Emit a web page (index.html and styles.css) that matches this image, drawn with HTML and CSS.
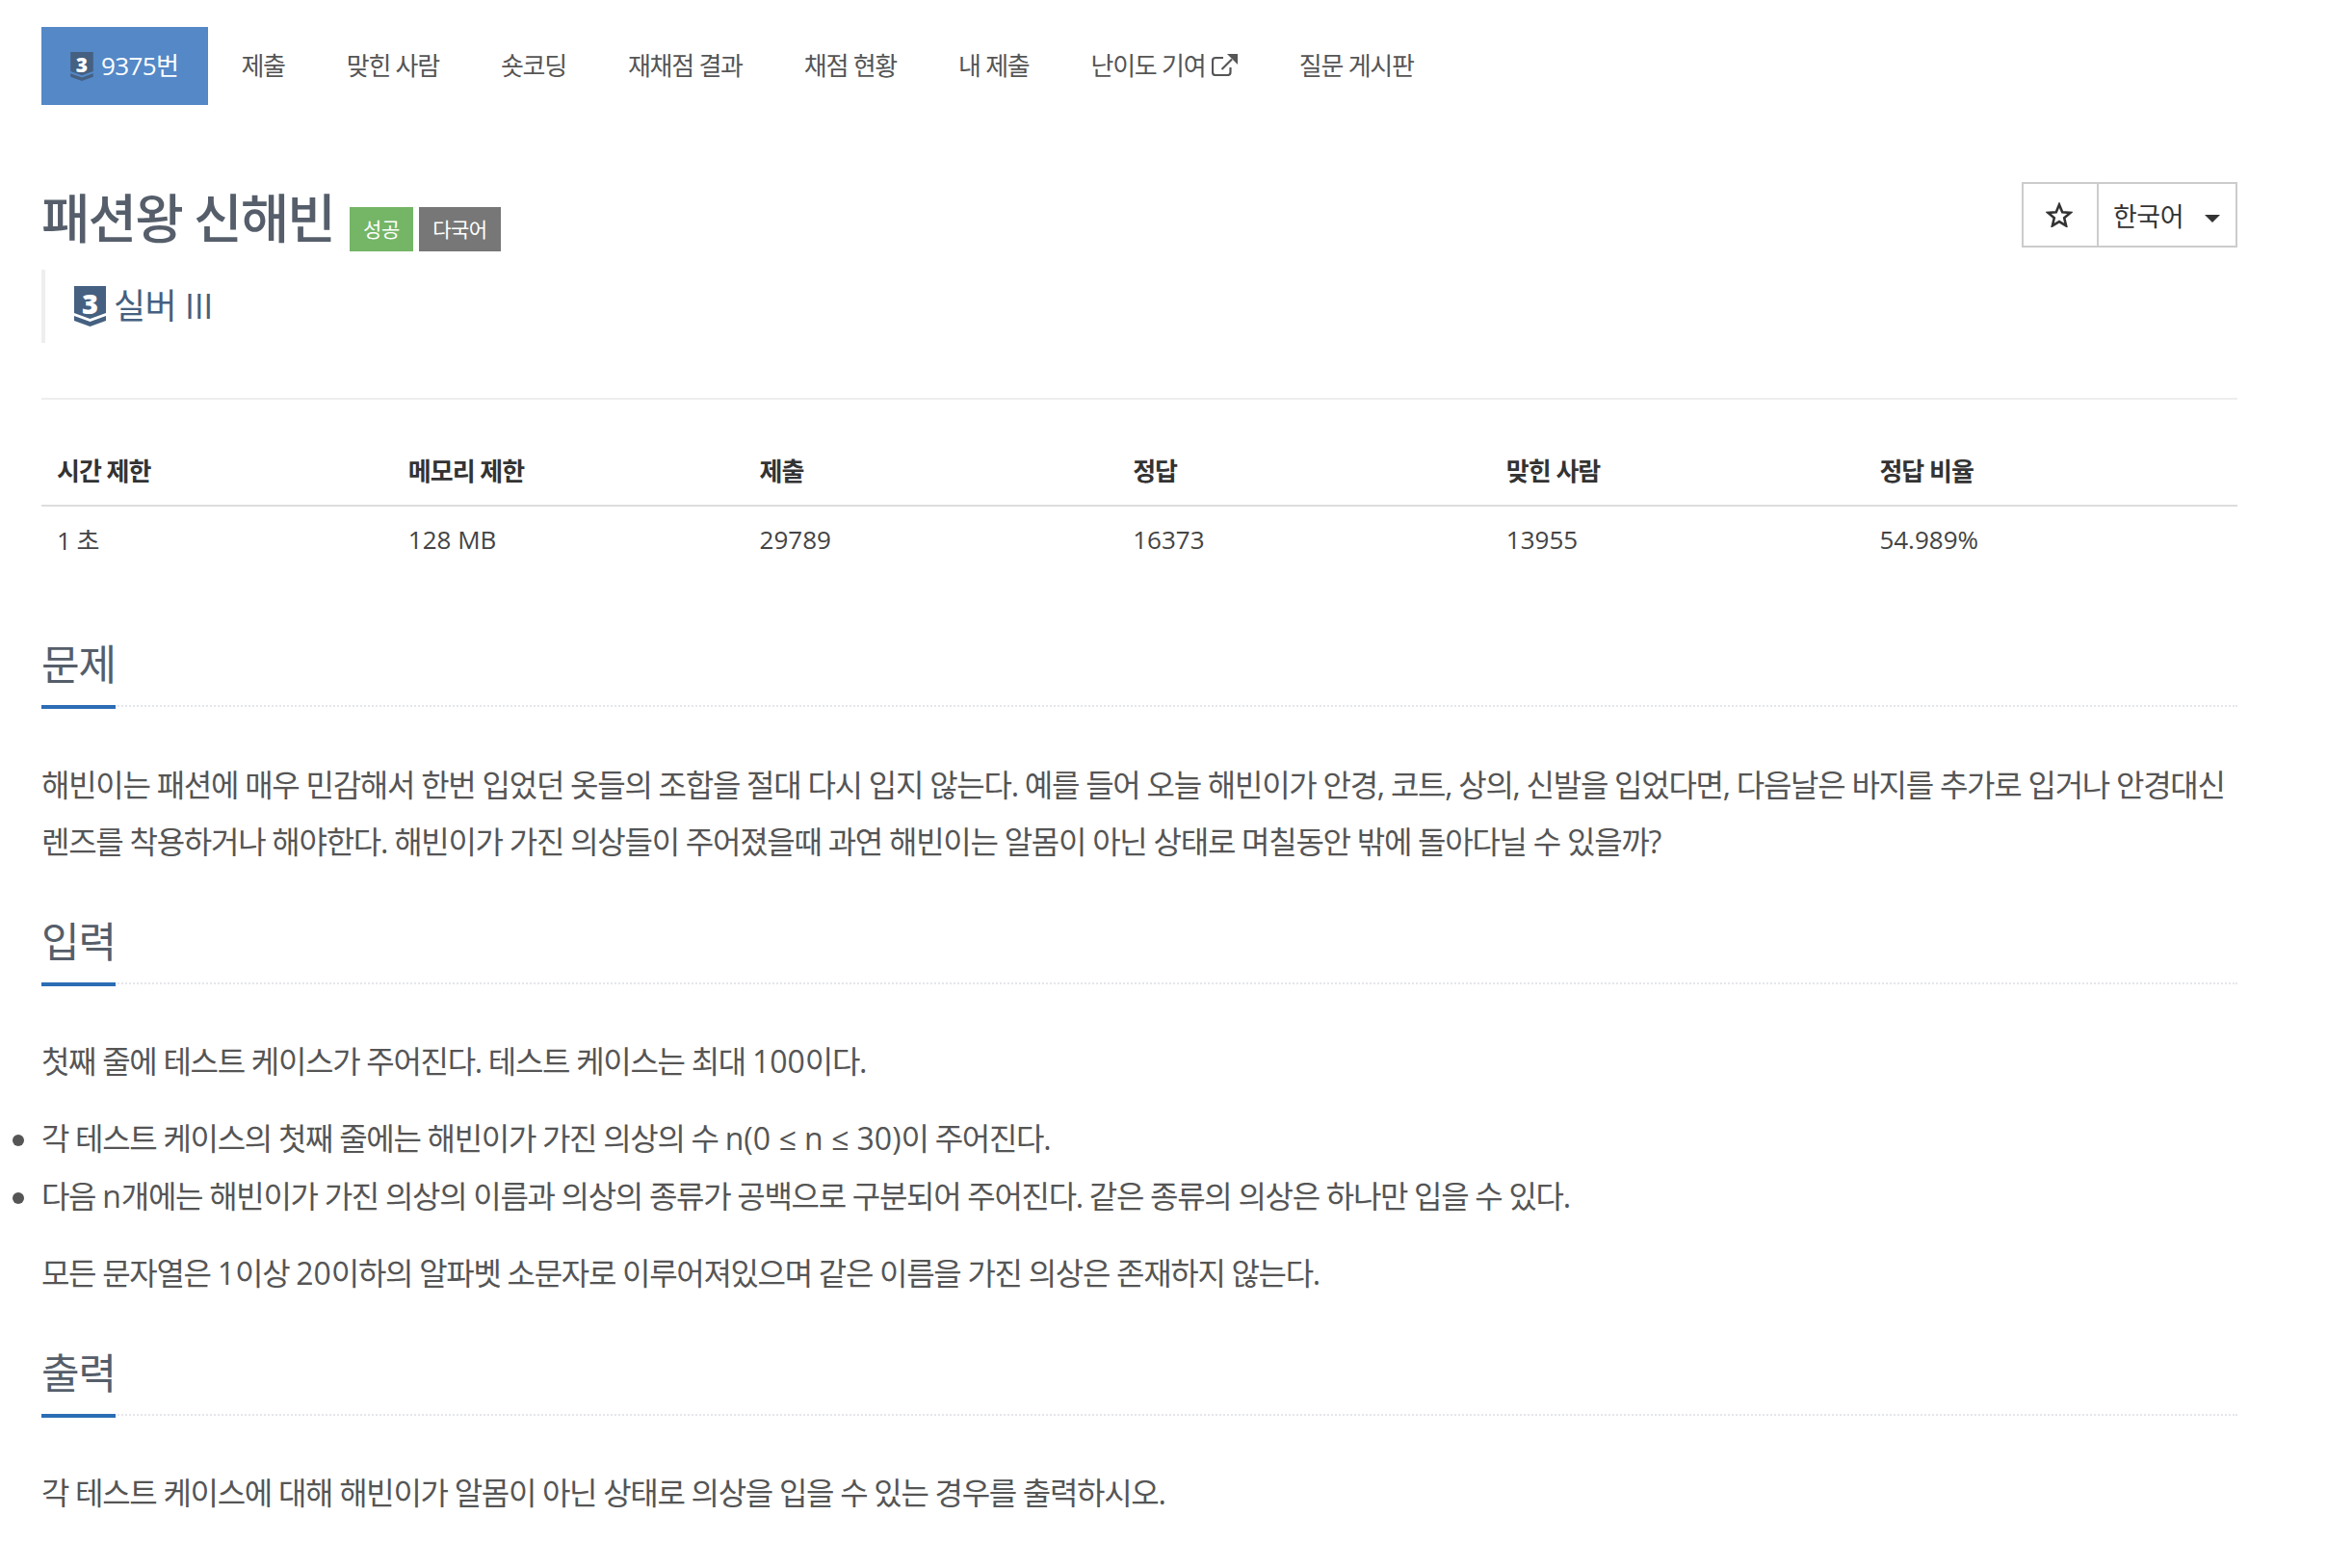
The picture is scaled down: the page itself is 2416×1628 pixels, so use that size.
FILE: index.html
```html
<!DOCTYPE html>
<html lang="ko">
<head>
<meta charset="utf-8">
<title>패션왕 신해빈</title>
<link rel="stylesheet" href="styles.css">
</head>
<body>
<nav class="tabs">
  <a class="tab active"><span class="tier tier-small"><svg class="tier-svg" viewBox="0 0 33 42"><path class="tier-shape" d="M0 0H33V28L16.5 34L0 28Z"/><path class="tier-shape" d="M0 31L16.5 37L33 31V36L16.5 42L0 36Z"/></svg><b class="tier-num">3</b></span><span class="tab-text">9375번</span></a>
  <a class="tab"><span class="tab-text">제출</span></a>
  <a class="tab"><span class="tab-text">맞힌 사람</span></a>
  <a class="tab"><span class="tab-text">숏코딩</span></a>
  <a class="tab"><span class="tab-text">재채점 결과</span></a>
  <a class="tab"><span class="tab-text">채점 현황</span></a>
  <a class="tab"><span class="tab-text">내 제출</span></a>
  <a class="tab"><span class="tab-text">난이도 기여 </span><svg class="ext" viewBox="0 0 27 23"><path d="M19.5 14V19A3 3 0 0 1 16.5 22H4A3 3 0 0 1 1 19V7A3 3 0 0 1 4 4H12" /><path d="M10.5 16L21 5.5" /><path class="ext-head" d="M16 0H27V11Z"/></svg></a>
  <a class="tab"><span class="tab-text">질문 게시판</span></a>
</nav>

<header class="head">
  <div class="head-main">
    <h1 class="title"><span>패션왕 신해빈</span><span class="label label-ok">성공</span><span class="label label-multi">다국어</span></h1>
    <blockquote class="rating"><span class="tier tier-big"><svg class="tier-svg" viewBox="0 0 33 42"><path class="tier-shape" d="M0 0H33V28L16.5 34L0 28Z"/><path class="tier-shape" d="M0 31L16.5 37L33 31V36L16.5 42L0 36Z"/></svg><b class="tier-num">3</b></span><span class="rating-text">실버 III</span></blockquote>
  </div>
  <div class="actions">
    <button class="btn btn-star"><svg class="star" viewBox="0 0 28 26"><path d="M14 2.5L17.2 10.2L25.5 10.9L19.2 16.3L21.1 24.4L14 20.1L6.9 24.4L8.8 16.3L2.5 10.9L10.8 10.2Z"/></svg></button>
    <button class="btn btn-lang">한국어<span class="caret"></span></button>
  </div>
</header>

<hr class="rule">

<table class="info">
  <colgroup><col class="c16"><col class="c16"><col class="c17"><col class="c17"><col class="c17"><col class="c17"></colgroup>
  <thead><tr><th>시간 제한</th><th>메모리 제한</th><th>제출</th><th>정답</th><th>맞힌 사람</th><th>정답 비율</th></tr></thead>
  <tbody><tr><td>1 초</td><td>128 MB</td><td>29789</td><td>16373</td><td>13955</td><td>54.989%</td></tr></tbody>
</table>

<section class="section sec-first">
  <h2 class="sec-title"><span>문제</span></h2>
  <p class="para para-wide">해빈이는 패션에 매우 민감해서 한번 입었던 옷들의 조합을 절대 다시 입지 않는다. 예를 들어 오늘 해빈이가 안경, 코트, 상의, 신발을 입었다면, 다음날은 바지를 추가로 입거나 안경대신 렌즈를 착용하거나 해야한다. 해빈이가 가진 의상들이 주어졌을때 과연 해빈이는 알몸이 아닌 상태로 며칠동안 밖에 돌아다닐 수 있을까?</p>
</section>

<section class="section">
  <h2 class="sec-title"><span>입력</span></h2>
  <p class="para">첫째 줄에 테스트 케이스가 주어진다. 테스트 케이스는 최대 <span class="lat">100</span>이다.</p>
  <ul class="list">
    <li>각 테스트 케이스의 첫째 줄에는 해빈이가 가진 의상의 수 <span class="lat">n(0 ≤ n ≤ 30)</span>이 주어진다.</li>
    <li>다음 <span class="lat">n</span>개에는 해빈이가 가진 의상의 이름과 의상의 종류가 공백으로 구분되어 주어진다. 같은 종류의 의상은 하나만 입을 수 있다.</li>
  </ul>
  <p class="para">모든 문자열은 <span class="lat">1</span>이상 <span class="lat">20</span>이하의 알파벳 소문자로 이루어져있으며 같은 이름을 가진 의상은 존재하지 않는다.</p>
</section>

<section class="section">
  <h2 class="sec-title"><span>출력</span></h2>
  <p class="para">각 테스트 케이스에 대해 해빈이가 알몸이 아닌 상태로 의상을 입을 수 있는 경우를 출력하시오.</p>
</section>
</body>
</html>
```

FILE: styles.css
```css
* { box-sizing: border-box; }
html, body { height: 1628px; overflow: hidden; }
body {
  margin: 0;
  padding: 28px 93px 0 43px;
  background: #fff;
  color: #555;
  font-family: "Open Sans", "Noto Sans CJK KR", sans-serif;
  font-size: 26px;
}
.tabs { display: flex; height: 81px; }
.tab {
  display: flex;
  align-items: center;
  padding: 0 32px;
  font-size: 26px;
  letter-spacing: -1.25px;
  color: #555;
  white-space: pre;
}
.tab-text { margin-top: -3px; }
.tab.active { background: #5488c7; color: #fff; padding: 0 31px 0 30px; margin-right: 2px; letter-spacing: -0.6px; }
.tier { display: block; flex: none; position: relative; }
.tier-svg { display: block; width: 100%; height: 100%; }
.tier-shape { fill: #456080; }
.tier-num { position: absolute; left: 0; right: 0; text-align: center; color: #fff; font-weight: 800; font-family: "Open Sans", sans-serif; letter-spacing: 0; }
.tier-small { width: 24px; height: 30px; margin-right: 8px; }
.tier-small .tier-num { top: 0; font-size: 21px; line-height: 27px; }
.tier-big { width: 33px; height: 42px; margin-right: 8px; }
.tier-big .tier-num { top: 0; font-size: 29px; line-height: 36px; }
.ext { width: 27px; height: 23px; fill: none; stroke: #555; stroke-width: 2.2; margin: -3px 0 0 1px; }
.ext-head { fill: #555; stroke: none; }

.head { display: flex; justify-content: space-between; align-items: flex-start; margin-top: 81px; }
.title {
  display: flex;
  align-items: flex-end;
  margin: 0;
  height: 72px;
  font-size: 55px;
  font-weight: 500;
  line-height: 72px;
  color: #555e6a;
  letter-spacing: -2px;
}
.label {
  display: flex;
  align-items: center;
  justify-content: center;
  height: 46px;
  margin-bottom: 1px;
  font-size: 21px;
  font-weight: 400;
  line-height: 46px;
  letter-spacing: -0.5px;
  color: #fff;
}
.label-ok { width: 66px; margin-left: 16px; background: #74b566; }
.label-multi { width: 85px; margin-left: 6px; background: #777; }
.rating {
  display: flex;
  align-items: center;
  height: 76px;
  margin: 18px 0 0;
  padding-left: 30px;
  border-left: 4px solid #eee;
  font-size: 36px;
  color: #456080;
  letter-spacing: -0.5px;
}
.rating-text { margin-top: -5px; }
.actions { display: flex; margin-top: -1px; }
.btn {
  height: 68px;
  border: 2px solid #ccc;
  background: #fff;
  color: #333;
  font: inherit;
  font-size: 27px;
  padding: 0;
  display: flex;
  align-items: center;
}
.btn-star { width: 78px; justify-content: center; padding-right: 3px; border-right: 0; }
.star { width: 28px; height: 26px; fill: none; stroke: #333; stroke-width: 2.6; }
.btn-lang { width: 146px; padding-left: 15px; letter-spacing: -0.5px; }
.caret { width: 0; height: 0; margin: 8px 0 0 22px; border-left: 8px solid transparent; border-right: 8px solid transparent; border-top: 8px solid #333; }

.rule { height: 2px; margin: 57px 0 0; border: 0; background: #eee; }

.info { width: 100%; margin-top: 29px; border-collapse: collapse; table-layout: fixed; color: #333; }
.c16 { width: 16%; }
.c17 { width: 17%; }
.info th { height: 81px; padding: 8px 16px 0; text-align: left; font-size: 26px; font-weight: 700; letter-spacing: -1px; border-bottom: 2px solid #ddd; }
.info td { height: 70px; padding: 0 16px 2px; font-size: 26px; color: #444; }
.info td:first-child { letter-spacing: -0.5px; }

.section { margin-top: 38px; }
.sec-first { margin-top: 59px; }
.sec-title {
  margin: 0;
  height: 80px;
  font-size: 43px;
  font-weight: 400;
  line-height: 72px;
  color: #555e6a;
  border-bottom: 2px dotted #e4e6ea;
  letter-spacing: -1px;
}
.sec-title span { display: inline-block; height: 82px; border-bottom: 4px solid #2b6db5; }
.para { margin: 20px 0 0; font-size: 32px; line-height: 59.5px; letter-spacing: -1.32px; }
.para-wide { letter-spacing: -1.28px; }
.sec-title + .para { margin-top: 50.5px; }
.lat { letter-spacing: 0; }
.list { margin: 20.5px 0 0; padding: 0; list-style: none; }
.list li { position: relative; font-size: 32px; line-height: 60px; letter-spacing: -1.32px; }
.list li::before { content: ""; position: absolute; left: -30px; top: 26px; width: 12px; height: 12px; border-radius: 50%; background: #555; }
```
